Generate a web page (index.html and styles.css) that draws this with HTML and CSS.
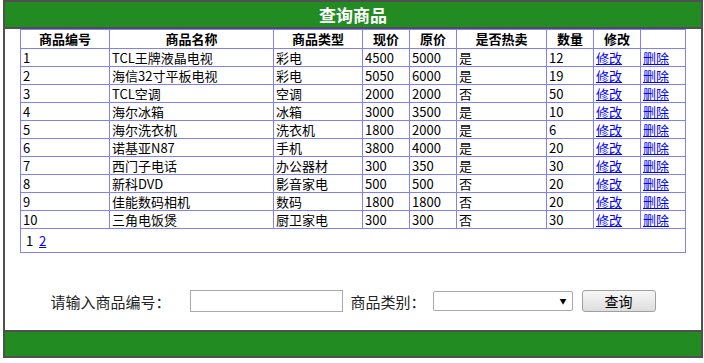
FILE: index.html
```html
<!DOCTYPE html>
<html lang="zh-CN">
<head>
    <meta charset="UTF-8">
    <meta name="viewport" content="width=device-width, initial-scale=1.0">
    <title>查询商品</title>
    <link rel="stylesheet" href="styles.css">
</head>

<body>
    <div class="wrapper">
        <div class="top">查询商品</div>

        <div class="content">
            <table class="goods">
                <colgroup>
                    <col class="c-id">
                    <col class="c-name">
                    <col class="c-type">
                    <col class="c-num">
                    <col class="c-num">
                    <col class="c-hot">
                    <col class="c-num">
                    <col class="c-num">
                    <col class="c-last">
                </colgroup>
                <tr>
                    <th>商品编号</th>
                    <th>商品名称</th>
                    <th>商品类型</th>
                    <th>现价</th>
                    <th>原价</th>
                    <th>是否热卖</th>
                    <th>数量</th>
                    <th>修改</th>
                    <th></th>
                </tr>
                <tr><td>1</td><td>TCL王牌液晶电视</td><td>彩电</td><td>4500</td><td>5000</td><td>是</td><td>12</td><td><a href="#">修改</a></td><td><a href="#">删除</a></td></tr>
                <tr><td>2</td><td>海信32寸平板电视</td><td>彩电</td><td>5050</td><td>6000</td><td>是</td><td>19</td><td><a href="#">修改</a></td><td><a href="#">删除</a></td></tr>
                <tr><td>3</td><td>TCL空调</td><td>空调</td><td>2000</td><td>2000</td><td>否</td><td>50</td><td><a href="#">修改</a></td><td><a href="#">删除</a></td></tr>
                <tr><td>4</td><td>海尔冰箱</td><td>冰箱</td><td>3000</td><td>3500</td><td>是</td><td>10</td><td><a href="#">修改</a></td><td><a href="#">删除</a></td></tr>
                <tr><td>5</td><td>海尔洗衣机</td><td>洗衣机</td><td>1800</td><td>2000</td><td>是</td><td>6</td><td><a href="#">修改</a></td><td><a href="#">删除</a></td></tr>
                <tr><td>6</td><td>诺基亚N87</td><td>手机</td><td>3800</td><td>4000</td><td>是</td><td>20</td><td><a href="#">修改</a></td><td><a href="#">删除</a></td></tr>
                <tr><td>7</td><td>西门子电话</td><td>办公器材</td><td>300</td><td>350</td><td>是</td><td>30</td><td><a href="#">修改</a></td><td><a href="#">删除</a></td></tr>
                <tr><td>8</td><td>新科DVD</td><td>影音家电</td><td>500</td><td>500</td><td>否</td><td>20</td><td><a href="#">修改</a></td><td><a href="#">删除</a></td></tr>
                <tr><td>9</td><td>佳能数码相机</td><td>数码</td><td>1800</td><td>1800</td><td>否</td><td>20</td><td><a href="#">修改</a></td><td><a href="#">删除</a></td></tr>
                <tr><td>10</td><td>三角电饭煲</td><td>厨卫家电</td><td>300</td><td>300</td><td>否</td><td>30</td><td><a href="#">修改</a></td><td><a href="#">删除</a></td></tr>
                <tr>
                    <td class="pager" colspan="9">1&nbsp; <a href="#">2</a></td>
                </tr>
            </table>

            <form class="search">
                <label for="goodsId">请输入商品编号：</label>
                <input type="text" id="goodsId" name="goodsId">
                <label for="goodsType" class="type-label">商品类别：</label>
                <span class="select-box">
                    <select id="goodsType" name="goodsType">
                        <option value=""></option>
                    </select>
                    <span class="arrow">▼</span>
                </span>
                <button type="submit">查询</button>
            </form>
        </div>

        <div class="bottom"></div>
    </div>
</body>
</html>
```

FILE: styles.css
```css
body {
    margin: 0;
    font-family: "Noto Sans CJK SC", sans-serif;
    background: #fff;
}

.wrapper {
    width: 700px;
    margin-left: 3px;
    border: 2px solid #505050;
    box-sizing: border-box;
}

.top {
    height: 25px;
    line-height: 25px;
    background-color: #228b22;
    border-bottom: 2px solid #505050;
    color: #fff;
    font-size: 17px;
    font-weight: bold;
    text-align: center;
}

.content {
    height: 301px;
    background: #fff;
}

.bottom {
    height: 24px;
    background-color: #228b22;
    border-top: 2px solid #505050;
}

.goods {
    width: 666px;
    margin: 0 auto;
    border-collapse: collapse;
    table-layout: fixed;
    font-size: 13px;
    color: #000;
}

.c-id { width: 89px; }
.c-name { width: 164px; }
.c-type { width: 89px; }
.c-num { width: 47px; }
.c-hot { width: 90px; }
.c-last { width: 45px; }

.goods th,
.goods td {
    border: 1px solid #8080ff;
    padding: 0 2px;
    white-space: nowrap;
    overflow: hidden;
}

.goods th {
    height: 18px;
    line-height: 18px;
    font-weight: bold;
    text-align: center;
}

.goods td {
    height: 17px;
    line-height: 17px;
    text-align: left;
}

.goods a {
    color: #0000ff;
}

.goods td.pager {
    height: 22px;
    line-height: 22px;
    padding-left: 5px;
    padding-top: 1px;
}

.search {
    display: flex;
    align-items: center;
    justify-content: center;
    margin: 37px 0 0;
    font-size: 15px;
    color: #222;
}

.search label {
    margin-right: 19px;
}

.search .type-label {
    margin-left: 8px;
    margin-right: 7px;
}

.search input {
    width: 153px;
    height: 22px;
    box-sizing: border-box;
    border: 1px solid #a9a9a9;
    padding: 0 3px;
    margin: 0;
}

.select-box {
    position: relative;
    display: inline-block;
    margin-right: 9px;
}

.select-box select {
    width: 140px;
    height: 20px;
    display: block;
    box-sizing: border-box;
    border: 1px solid #a9a9a9;
    border-radius: 2px;
    background: #fff;
    appearance: none;
    -webkit-appearance: none;
    margin: 0;
}

.select-box .arrow {
    position: absolute;
    right: 6px;
    top: 3px;
    font-size: 7px;
    line-height: 14px;
    color: #000;
    pointer-events: none;
}

.search button {
    width: 74px;
    height: 22px;
    border: 1px solid #a0a0a0;
    border-radius: 3px;
    background: linear-gradient(#f7f7f7, #dddddd);
    font-family: "Noto Sans CJK SC", sans-serif;
    font-size: 14px;
    line-height: 18px;
    color: #000;
    padding: 0;
    margin: 0;
}
```
